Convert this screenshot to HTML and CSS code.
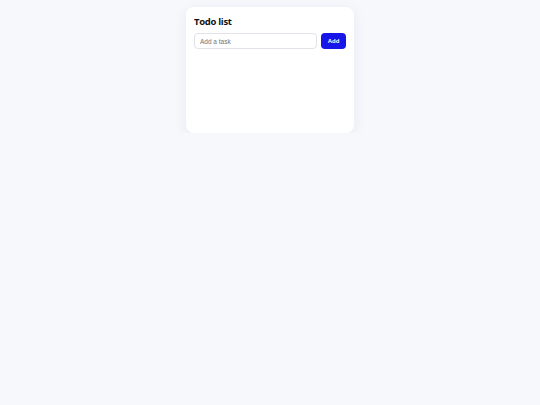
FILE: index.html
```html
<!DOCTYPE html>
<html>
<head>
<meta charset="utf-8">
<link rel="stylesheet" href="styles.css">
</head>
<body>
<div class="card">
  <h1 class="title">Todo list</h1>
  <form class="row" onsubmit="return false">
    <input class="task-input" type="text" placeholder="Add a task">
    <button class="add-btn" type="submit">Add</button>
  </form>
  <ul class="list"></ul>
</div>
</body>
</html>
```
FILE: styles.css
```css
html, body {
  margin: 0;
  padding: 0;
  background: #f7f8fc;
}
body {
  padding-top: 7px;
  font-family: "Open Sans", "Liberation Sans", sans-serif;
}
.card {
  width: 168px;
  height: 126px;
  box-sizing: border-box;
  margin: 0 auto;
  padding: 9px 8px 8px;
  background: #ffffff;
  border-radius: 8px;
  box-shadow: 0 3px 14px rgba(30, 40, 90, 0.07);
}
.title {
  margin: 0;
  font-size: 9.5px;
  line-height: 11px;
  font-weight: 700;
  letter-spacing: -0.3px;
  color: #111111;
}
.row {
  display: flex;
  gap: 4px;
  margin: 6px 0 0;
}
.task-input {
  flex: 1;
  min-width: 0;
  height: 16px;
  box-sizing: border-box;
  border: 1px solid #e1e3e8;
  border-radius: 4px;
  padding: 0 5px;
  font-family: "Liberation Sans", Arial, sans-serif;
  font-size: 6.5px;
  color: #333;
  outline: none;
}
.task-input::placeholder {
  color: #6f737a;
}
.add-btn {
  width: 25px;
  height: 16px;
  box-sizing: border-box;
  padding: 0;
  border: none;
  border-radius: 4px;
  background: #1616e8;
  color: #ffffff;
  font-family: "Liberation Sans", Arial, sans-serif;
  font-size: 6px;
  font-weight: 700;
}
.list {
  margin: 0;
  padding: 0;
  list-style: none;
}
```
